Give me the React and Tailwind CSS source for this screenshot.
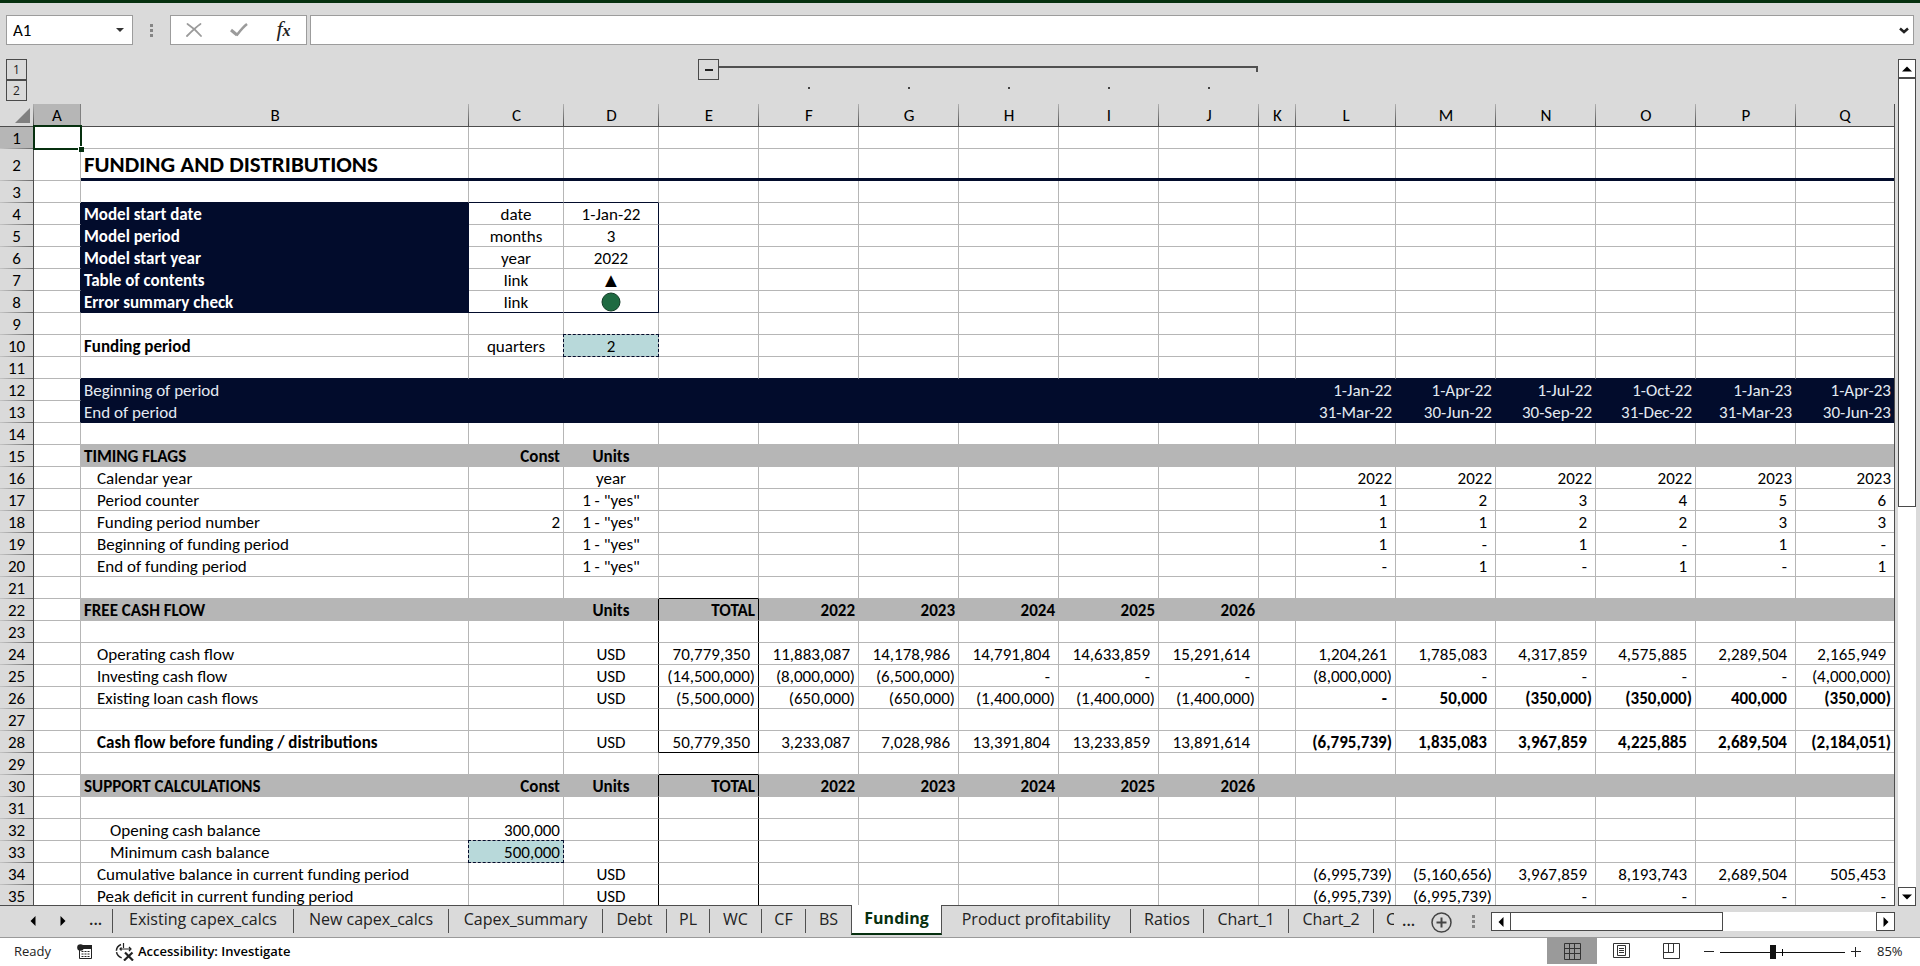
const COLS = ["A", "B", "C", "D", "E", "F", "G", "H", "I", "J", "K", "L", "M", "N", "O", "P", "Q"];

const WIDTHS = {
  A: "w-[47px]", B: "w-[388px]", C: "w-[95px]", D: "w-[95px]", E: "w-[100px]", F: "w-[100px]",
  G: "w-[100px]", H: "w-[100px]", I: "w-[100px]", J: "w-[100px]", K: "w-[37px]", L: "w-[100px]",
  M: "w-[100px]", N: "w-[100px]", O: "w-[100px]", P: "w-[100px]", Q: "",
};

const YEARS = { F: "2022", G: "2023", H: "2024", I: "2025", J: "2026" };
const spread = (keys, values) => Object.fromEntries(values.map((v, i) => [keys[i], v]));
const quarters = (...v) => spread(["L", "M", "N", "O", "P", "Q"], v);
const totals = (...v) => spread(["E", "F", "G", "H", "I", "J"], v);

const DATA = {
  2: { B: "FUNDING AND DISTRIBUTIONS" },
  4: { B: "Model start date", C: "date", D: "1-Jan-22" },
  5: { B: "Model period", C: "months", D: "3" },
  6: { B: "Model start year", C: "year", D: "2022" },
  7: { B: "Table of contents", C: "link", D: "▲" },
  8: { B: "Error summary check", C: "link", D: "status" },
  10: { B: "Funding period", C: "quarters", D: "2" },
  12: { B: "Beginning of period", ...quarters("1-Jan-22", "1-Apr-22", "1-Jul-22", "1-Oct-22", "1-Jan-23", "1-Apr-23") },
  13: { B: "End of period", ...quarters("31-Mar-22", "30-Jun-22", "30-Sep-22", "31-Dec-22", "31-Mar-23", "30-Jun-23") },
  15: { B: "TIMING FLAGS", C: "Const", D: "Units" },
  16: { B: "Calendar year", D: "year", ...quarters("2022", "2022", "2022", "2022", "2023", "2023") },
  17: { B: "Period counter", D: '1 - "yes"', ...quarters("1", "2", "3", "4", "5", "6") },
  18: { B: "Funding period number", C: "2", D: '1 - "yes"', ...quarters("1", "1", "2", "2", "3", "3") },
  19: { B: "Beginning of funding period", D: '1 - "yes"', ...quarters("1", "-", "1", "-", "1", "-") },
  20: { B: "End of funding period", D: '1 - "yes"', ...quarters("-", "1", "-", "1", "-", "1") },
  22: { B: "FREE CASH FLOW", D: "Units", E: "TOTAL", ...YEARS },
  24: {
    B: "Operating cash flow", D: "USD",
    ...totals("70,779,350", "11,883,087", "14,178,986", "14,791,804", "14,633,859", "15,291,614"),
    ...quarters("1,204,261", "1,785,083", "4,317,859", "4,575,885", "2,289,504", "2,165,949"),
  },
  25: {
    B: "Investing cash flow", D: "USD",
    ...totals("(14,500,000)", "(8,000,000)", "(6,500,000)", "-", "-", "-"),
    ...quarters("(8,000,000)", "-", "-", "-", "-", "(4,000,000)"),
  },
  26: {
    B: "Existing loan cash flows", D: "USD",
    ...totals("(5,500,000)", "(650,000)", "(650,000)", "(1,400,000)", "(1,400,000)", "(1,400,000)"),
    ...quarters("-", "50,000", "(350,000)", "(350,000)", "400,000", "(350,000)"),
  },
  28: {
    B: "Cash flow before funding / distributions", D: "USD",
    ...totals("50,779,350", "3,233,087", "7,028,986", "13,391,804", "13,233,859", "13,891,614"),
    ...quarters("(6,795,739)", "1,835,083", "3,967,859", "4,225,885", "2,689,504", "(2,184,051)"),
  },
  30: { B: "SUPPORT CALCULATIONS", C: "Const", D: "Units", E: "TOTAL", ...YEARS },
  32: { B: "Opening cash balance", C: "300,000" },
  33: { B: "Minimum cash balance", C: "500,000" },
  34: {
    B: "Cumulative balance in current funding period", D: "USD",
    ...quarters("(6,995,739)", "(5,160,656)", "3,967,859", "8,193,743", "2,689,504", "505,453"),
  },
  35: {
    B: "Peak deficit in current funding period", D: "USD",
    ...quarters("(6,995,739)", "(6,995,739)", "-", "-", "-", "-"),
  },
};

const isSection = (r) => r === 15 || r === 22 || r === 30;
const isDark = (r, c) => c !== "A" && (r === 12 || r === 13 || (c === "B" && r >= 4 && r <= 8));
const inTotalBox = (r) => (r >= 22 && r <= 28) || r >= 30;

function background(r, c) {
  if (isDark(r, c)) return "bg-[#020c2c]";
  if (isSection(r) && c !== "A") return "bg-[#b6b6b6]";
  if (r === 10 && c === "D") return "bg-[#b8d9da]";
  if (r === 33 && c === "C") return "bg-[#b8d9da]";
  return "bg-white";
}

function borderRight(r, c) {
  if (c === "Q") return "";
  // The thick rule under the title must run unbroken, so the column line here is a background.
  if (r === 2 && c !== "A") return "bg-[linear-gradient(#b6b6b6,#b6b6b6)] bg-[length:1px_100%] bg-right bg-no-repeat bg-clip-padding";
  if ((c === "D" || c === "E") && inTotalBox(r)) return "border-r border-r-black";
  if (r >= 4 && r <= 8 && (c === "A" || c === "B" || c === "D")) return "border-r border-r-[#020c2c]";
  if (r === 12 || r === 13) return "border-r border-r-[#020c2c]";
  return "border-r border-r-[#b6b6b6]";
}

function borderBottom(r, c) {
  if (c === "A") return "border-b border-b-[#b6b6b6]";
  if (r === 2) return "border-b-3 border-b-[#020c2c]";
  if (c === "E" && (r === 21 || r === 28 || r === 29)) return "border-b border-b-black";
  if (r === 3 && (c === "B" || c === "C" || c === "D")) return "border-b border-b-[#020c2c]";
  if (r === 8 && (c === "C" || c === "D")) return "border-b border-b-[#020c2c]";
  if (isDark(r, c) || r === 11) return "border-b border-b-[#020c2c]";
  return "border-b border-b-[#b6b6b6]";
}

function textStyle(r, c, value) {
  if (c === "B") {
    if (r === 2) return "pl-[3px] text-left text-[23px] font-bold text-black";
    if (r >= 4 && r <= 8) return "pl-[3px] text-left font-bold text-white";
    if (r === 10 || isSection(r)) return "pl-[3px] text-left font-bold text-black";
    if (r === 12 || r === 13) return "pl-[3px] text-left text-[#e4eaf2]";
    if (r === 28) return "pl-4 text-left font-bold text-black";
    if (r === 32 || r === 33) return "pl-[29px] text-left text-black";
    return "pl-4 text-left text-black";
  }
  if (c === "D" || (c === "C" && r <= 10)) {
    if (isSection(r)) return "text-center font-bold text-black";
    return "text-center text-black";
  }
  if (isSection(r)) return "pr-[3px] text-right font-bold text-black";
  if (r === 12 || r === 13) return "pr-[3px] text-right text-[#e4eaf2]";
  if (c === "C" || r === 16 || value.endsWith(")")) {
    return (r === 26 || r === 28) && c >= "L"
      ? "pr-[3px] text-right font-bold text-black"
      : "pr-[3px] text-right text-black";
  }
  if ((r === 26 || r === 28) && c >= "L") return "pr-2 text-right font-bold text-black";
  return "pr-2 text-right text-black";
}

function CellContent({ r, c, value }) {
  if (r === 1 && c === "A") {
    return (
      <>
        <span className="pointer-events-none absolute -top-0.5 -right-0.5 -bottom-0.5 -left-px z-10 border-2 border-[#06300f]" />
        <span className="absolute -right-[4px] -bottom-[4px] z-10 size-[6px] border-t border-l border-white bg-[#06300f]" />
      </>
    );
  }
  if (r === 7 && c === "D") return <a href="#contents" className="block text-xl leading-[19px]">{value}</a>;
  if (r === 8 && c === "D") {
    return (
      <svg viewBox="0 0 20 20" className="relative z-10 mx-auto -mt-0.5 -mb-px block size-5" role="img" aria-label="No errors">
        <circle cx="10" cy="10" r="9" fill="#1f6b42" stroke="#123c26" />
      </svg>
    );
  }
  if ((r === 10 && c === "D") || (r === 33 && c === "C")) {
    return (
      <>
        {value}
        <span className="absolute -inset-px border border-dashed border-[#020c2c]" />
      </>
    );
  }
  return value ?? null;
}

function Grid() {
  return (
    <table className="w-full min-w-[1760px] table-fixed border-separate border-spacing-0 text-[17px] leading-[19px] whitespace-nowrap">
      <colgroup>
        <col className="w-[34px]" />
        {COLS.map((c) => (
          <col key={c} className={WIDTHS[c]} />
        ))}
      </colgroup>
      <thead>
        <tr className="h-[23px]">
          <th className="border-b border-b-[#4d4d4d] bg-[#dadada] bg-[linear-gradient(#b0b0b0,#4d4d4d)] bg-[length:1px_100%] bg-right bg-no-repeat p-0" aria-label="Select all">
            <svg viewBox="0 0 15 15" className="mr-1 ml-auto block size-[15px]">
              <path d="M15 0v15H0z" fill="#808080" />
            </svg>
          </th>
          {COLS.map((c) => (
            <th
              key={c}
              className={
                "border-b border-b-[#4d4d4d] p-0 text-center font-normal text-black " +
                (c === "A"
                  ? "border-r border-r-[#808080] bg-[#b6b6b6]"
                  : c === "Q"
                    ? "bg-[#dadada]"
                    : "bg-[#dadada] bg-[linear-gradient(#b0b0b0,#4d4d4d)] bg-[length:1px_100%] bg-right bg-no-repeat")
              }
            >
              {c}
            </th>
          ))}
        </tr>
      </thead>
      <tbody>
        {Array.from({ length: 35 }, (_, i) => i + 1).map((r) => (
          <tr key={r} className={r === 2 ? "h-8" : "h-[22px]"}>
            <th
              className={
                "border-r border-r-[#4d4d4d] bg-[linear-gradient(to_right,#c4c4c4,#6a6a6a)] bg-[length:100%_1px] bg-bottom bg-no-repeat px-0 pt-0.5 pb-px text-center font-normal text-black " +
                (r === 1 ? "bg-[#b6b6b6]" : "bg-[#dadada]")
              }
            >
              {r}
            </th>
            {COLS.map((c) => {
              const value = DATA[r]?.[c];
              return (
                <td
                  key={c}
                  className={`relative px-0 pt-0.5 pb-0 ${background(r, c)} ${borderRight(r, c)} ${borderBottom(r, c)} ${value ? textStyle(r, c, value) : ""}`}
                >
                  <CellContent r={r} c={c} value={value} />
                </td>
              );
            })}
          </tr>
        ))}
      </tbody>
    </table>
  );
}

function Dots() {
  return (
    <span className="flex w-[3px] flex-col gap-[2px]">
      <span className="size-[3px] bg-[#858585]" />
      <span className="size-[3px] bg-[#858585]" />
      <span className="size-[3px] bg-[#858585]" />
    </span>
  );
}

function FormulaBar() {
  return (
    <div className="flex h-14 shrink-0 items-start pt-3 pr-1.5 pl-1.5">
      <div className="flex h-[30px] w-[127px] items-center border border-[#9c9c9c] bg-white">
        <input aria-label="Name box" defaultValue="A1" className="min-w-0 flex-1 bg-transparent pt-px pl-1.5 text-[17px] text-black outline-none" />
        <button aria-label="Name list" className="mr-2 flex size-2 items-center justify-center">
          <svg viewBox="0 0 8 4" className="h-1 w-2"><path d="M0 0h8L4 4z" fill="#333" /></svg>
        </button>
      </div>
      <div className="flex h-[30px] w-[37px] items-center justify-center"><Dots /></div>
      <div className="flex h-[30px] w-[137px] items-center border border-[#9c9c9c] bg-white">
        <button aria-label="Cancel" className="flex flex-1 justify-center">
          <svg viewBox="0 0 16 14" className="h-[14px] w-4" fill="none" stroke="#9b9b9b" strokeLinecap="round">
            <path d="M1 13C5 9 10 4 14.500 1" strokeWidth="1.800" />
            <path d="M1.500 1C6 4 11 8 15 13" strokeWidth="1.800" />
          </svg>
        </button>
        <button aria-label="Enter" className="flex flex-1 justify-center">
          <svg viewBox="0 0 18 14" className="h-[14px] w-[18px]" fill="none" stroke="#9b9b9b">
            <path d="M1 7l6 5" strokeWidth="3" />
            <path d="M6.500 12.500C10 8 13 4 17 1" strokeWidth="2.500" />
          </svg>
        </button>
        <button aria-label="Insert function" className="flex flex-1 items-baseline justify-center font-['Liberation_Serif',serif] leading-6 text-[#222] italic">
          <span className="text-[22px]">f</span>
          <span className="text-base font-bold">x</span>
        </button>
      </div>
      <div className="ml-[3px] flex h-[30px] flex-1 items-center border border-[#9c9c9c] bg-white">
        <input aria-label="Formula" className="min-w-0 flex-1 bg-transparent px-2 outline-none" />
        <button aria-label="Expand formula bar" className="mr-1">
          <svg viewBox="0 0 10 7" className="h-[7px] w-[10px]"><path d="M1 1.500l4 3.500 4-3.500" fill="none" stroke="#222" strokeWidth="2.500" /></svg>
        </button>
      </div>
    </div>
  );
}

function Outline() {
  return (
    <div className="flex h-[45px] shrink-0 pl-1.5 font-['Open_Sans',sans-serif]">
      <div className="flex flex-col text-xs text-[#222]">
        <button className="flex size-[21px] items-center justify-center border border-[#4a4a4a]">1</button>
        <button className="flex size-[21px] items-center justify-center border border-[#4a4a4a]">2</button>
      </div>
      <div className="flex flex-col pl-[671px]">
        <div className="flex">
          <button aria-label="Collapse group" className="flex size-[21px] items-center justify-center border border-[#4a4a4a]">
            <span className="h-0.5 w-2 bg-[#222]" />
          </button>
          <div className="mt-[7px] h-1.5 w-[539px] border-t-2 border-r-2 border-[#505050]" />
        </div>
        <div className="mt-[7px] flex pl-[61px]">
          {["F", "G", "H", "I", "J"].map((c) => (
            <span key={c} className="flex w-[100px] justify-center"><span className="size-0.5 bg-[#444]" /></span>
          ))}
        </div>
      </div>
    </div>
  );
}

function Arrow({ d }) {
  return (
    <svg viewBox="0 0 12 12" className="size-3"><path d={d} fill="#000" /></svg>
  );
}
const UP = "M1 8.500L6 3.500l5 5z";
const DOWN = "M1 3.500L6 8.500l5-5z";
const LEFT = "M8.500 1L3.500 6 8.500 11z";
const RIGHT = "M3.500 1L8.500 6 3.500 11z";

function VerticalScroll() {
  return (
    <div className="mr-1 ml-[3px] flex w-[18px] shrink-0 flex-col bg-white">
      <button aria-label="Scroll up" className="flex h-[19px] items-center justify-center border border-[#4a4a4a]"><Arrow d={UP} /></button>
      <div className="flex min-h-0 flex-1 flex-col">
        <div className="h-[53%] border border-[#4a4a4a]" />
      </div>
      <button aria-label="Scroll down" className="flex h-[19px] items-center justify-center border border-[#4a4a4a]"><Arrow d={DOWN} /></button>
    </div>
  );
}

const TABS = [
  ["Existing capex_calcs", "w-[182px]"], ["New capex_calcs", "w-[155px]"], ["Capex_summary", "w-[154px]"],
  ["Debt", "w-16"], ["PL", "w-[43px]"], ["WC", "w-[52px]"], ["CF", "w-11"], ["BS", "w-[45px]"],
  ["Funding", "w-[91px]"], ["Product profitability", "w-[189px]"], ["Ratios", "w-[73px]"],
  ["Chart_1", "w-[85px]"], ["Chart_2", "w-[85px]"],
];

function TabBar() {
  return (
    <div className="flex h-8 shrink-0 border-b border-[#9a9a9a] font-['Open_Sans',sans-serif] text-base text-[#222]">
      <div className="flex h-[30px] w-[112px] items-center">
        <button aria-label="Previous sheet" className="ml-[27px]"><Arrow d={LEFT} /></button>
        <button aria-label="Next sheet" className="ml-[18px]"><Arrow d={RIGHT} /></button>
        <button aria-label="More sheets to the left" className="mb-1 ml-5 leading-6 font-semibold">...</button>
      </div>
      <nav className="flex">
        {TABS.map(([name, width]) =>
          name === "Funding" ? (
            <button key={name} className={`${width} -mt-px flex h-[30px] items-center justify-center border-x border-b-2 border-x-[#505050] border-b-[#06300f] bg-white pb-0.5 font-bold text-[#06300f]`}>
              {name}
            </button>
          ) : (
            <button
              key={name}
              className={`${width} mt-[3px] flex h-6 items-center justify-center pb-1 ${name === "BS" ? "" : "border-r border-[#505050]"} ${name === "Existing capex_calcs" ? "border-l" : ""}`}
            >
              {name}
            </button>
          ),
        )}
        <button className="mt-[3px] flex h-6 w-5 items-center overflow-hidden pb-1 pl-3">C</button>
      </nav>
      <button aria-label="More sheets to the right" className="mb-1 ml-2 leading-6 font-semibold">...</button>
      <button aria-label="New sheet" className="mt-1.5 ml-4 size-[21px]">
        <svg viewBox="0 0 21 21" className="size-[21px]" fill="none" stroke="#444">
          <circle cx="10.500" cy="10.500" r="9.500" strokeWidth="1.500" />
          <path d="M10.500 5.500v10M5.500 10.500h10" strokeWidth="2" />
        </svg>
      </button>
      <div className="flex h-[30px] w-[39px] items-center justify-center pl-1"><Dots /></div>
      <div className="mt-1.5 mr-[25px] flex h-[19px] flex-1 bg-white">
        <button aria-label="Scroll left" className="flex w-5 items-center justify-center border border-[#4a4a4a]"><Arrow d={LEFT} /></button>
        <div className="flex flex-1"><div className="w-[58%] border border-l-0 border-[#4a4a4a]" /></div>
        <button aria-label="Scroll right" className="flex w-[19px] items-center justify-center border border-[#4a4a4a]"><Arrow d={RIGHT} /></button>
      </div>
    </div>
  );
}

function StatusBar() {
  return (
    <div className="flex h-7 shrink-0 items-center bg-white font-['Open_Sans',sans-serif] text-[13px] text-[#222]">
      <span className="w-[63px] pl-[14px]">Ready</span>
      <button aria-label="Record macro" className="ml-[14px]">
        <svg viewBox="0 0 16 16" className="size-4">
          <path d="M2.500 3v11.500h12V2" fill="none" stroke="#222" />
          <path d="M6 1h9v4H2V3z" fill="#222" />
          <circle cx="3.500" cy="3.500" r="3.300" fill="#222" />
          <path d="M4.500 7.500h2m1 0h2m1 0h2M4.500 10h2m1 0h2m1 0h2M4.500 12.500h2m1 0h2m1 0h2" stroke="#222" />
        </svg>
      </button>
      <button className="ml-[22px] flex items-center gap-1 font-semibold text-black">
        <svg viewBox="0 0 19 18" className="h-[18px] w-[19px]" fill="none" stroke="#222">
          <path d="M6 1.500C2.500 3 1 6 1.500 9c.4 3 2.500 5 5.500 6" strokeWidth="1.500" strokeDasharray="8 1.500" />
          <path d="M8.500 0v5M6 6h9M6.500 4.500L5 6l1.500 1.500M14 4l2 2-2 2" strokeWidth="1.200" />
          <path d="M10 9.500l8 8M17.500 9.500L9 17.500" strokeWidth="2.200" />
        </svg>
        Accessibility: Investigate
      </button>
      <div className="ml-auto flex h-full items-center">
        <button aria-label="Normal view" className="flex h-[26px] w-[50px] items-center justify-center self-start bg-[#9a9a9a]">
          <svg viewBox="0 0 17 17" className="size-[17px]" fill="none" stroke="#333"><path d="M.5.5h16v16H.5zM5.500.5v16M10.500.5v16M.5 5.500h16M.5 10.500h16" /></svg>
        </button>
        <button aria-label="Page layout view" className="flex h-[26px] w-[49px] items-center justify-center self-start">
          <svg viewBox="0 0 17 16" className="h-4 w-[17px]" fill="none" stroke="#333"><path d="M.5.500h16v14H.5zM4.500 2.500h8v10h-8zM6 5.500h5M6 7.500h5M6 9.500h5" /></svg>
        </button>
        <button aria-label="Page break preview" className="flex h-[26px] w-[50px] items-center justify-center self-start">
          <svg viewBox="0 0 17 16" className="h-4 w-[17px]" fill="none" stroke="#333"><path d="M.5.500h16v15H.5zM.5 9.500h10V.500M5.500.500v9" /></svg>
        </button>
        <button aria-label="Zoom out" className="ml-2">
          <svg viewBox="0 0 10 10" className="size-[10px]"><path d="M0 4.500h10" stroke="#222" /></svg>
        </button>
        <label className="relative ml-1.5 flex h-4 items-center">
          <span className="absolute left-[62px] h-[7px] w-px bg-black" />
          <input
            type="range"
            aria-label="Zoom"
            min="0"
            max="100"
            defaultValue="42"
            className="h-4 w-[125px] appearance-none bg-transparent bg-[linear-gradient(#111,#111)] bg-[length:100%_1px] bg-center bg-no-repeat [&::-webkit-slider-thumb]:h-[14px] [&::-webkit-slider-thumb]:w-1.5 [&::-webkit-slider-thumb]:appearance-none [&::-webkit-slider-thumb]:bg-[#111]"
          />
        </label>
        <button aria-label="Zoom in" className="ml-1.5">
          <svg viewBox="0 0 10 10" className="size-[10px]"><path d="M0 4.500h10M4.500 0v10" stroke="#222" /></svg>
        </button>
        <span className="w-[59px] pl-4 text-[13px]">85%</span>
      </div>
    </div>
  );
}

export default function App() {
  return (
    <div className="flex h-screen flex-col overflow-hidden bg-[#dadada] font-[Carlito,Calibri,Lato,sans-serif]">
      <div className="h-[3px] shrink-0 bg-[#06300f]" />
      <FormulaBar />
      <div className="flex min-h-0 flex-1">
        <div className="flex min-w-0 flex-1 flex-col">
          <Outline />
          <div className="min-h-0 flex-1 overflow-hidden border-r border-b border-[#4d4d4d]">
            <Grid />
          </div>
        </div>
        <VerticalScroll />
      </div>
      <TabBar />
      <StatusBar />
    </div>
  );
}
